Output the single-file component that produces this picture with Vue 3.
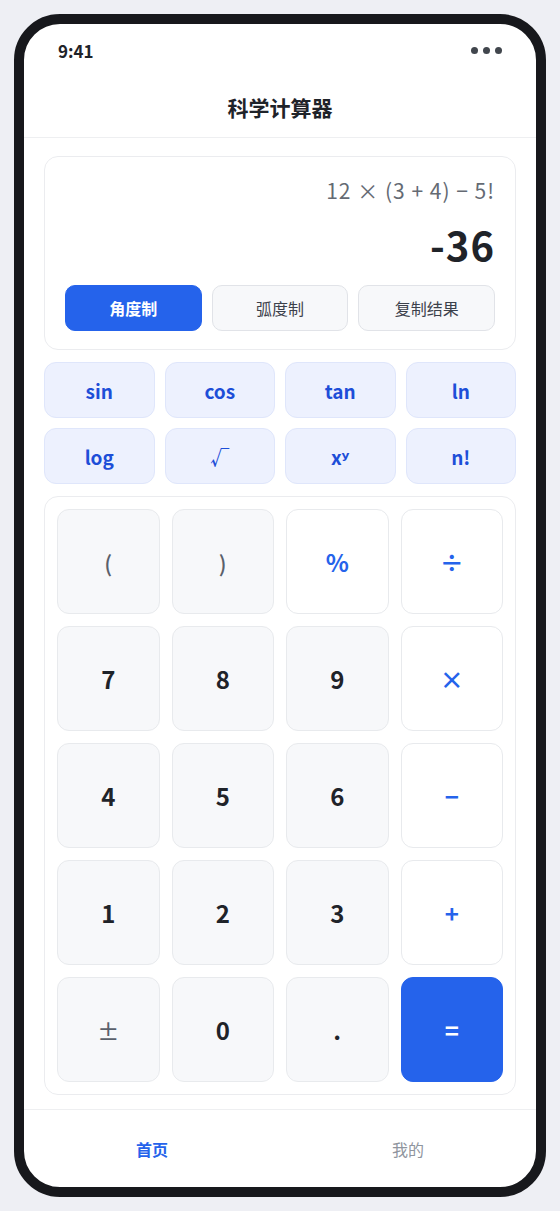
<script setup>
import { ref } from 'vue'

const modes = ['角度制', '弧度制', '复制结果']
const activeMode = ref('角度制')
const functions = ['sin', 'cos', 'tan', 'ln', 'log', '√', 'xʸ', 'n!']
const keys = [
  { label: '(', kind: 'aux' },
  { label: ')', kind: 'aux' },
  { label: '%', kind: 'operator' },
  { label: '÷', kind: 'operator' },
  { label: '7', kind: 'digit' },
  { label: '8', kind: 'digit' },
  { label: '9', kind: 'digit' },
  { label: '×', kind: 'operator' },
  { label: '4', kind: 'digit' },
  { label: '5', kind: 'digit' },
  { label: '6', kind: 'digit' },
  { label: '−', kind: 'operator' },
  { label: '1', kind: 'digit' },
  { label: '2', kind: 'digit' },
  { label: '3', kind: 'digit' },
  { label: '+', kind: 'operator' },
  { label: '±', kind: 'aux' },
  { label: '0', kind: 'digit' },
  { label: '.', kind: 'digit' },
  { label: '=', kind: 'equals' },
]
</script>

<template>
  <div class="page">
    <div class="phone">
      <div class="status">
        <span class="time">9:41</span>
        <span class="dots"><i></i><i></i><i></i></span>
      </div>
      <header class="header">
        <h1>科学计算器</h1>
      </header>
      <main class="content">
        <section class="display">
          <div class="expression">12 × (3 + 4) − 5!</div>
          <output class="result">-36</output>
          <div class="modes">
            <button
              v-for="mode in modes"
              :key="mode"
              type="button"
              class="mode"
              :class="{ active: mode === activeMode }"
            >{{ mode }}</button>
          </div>
        </section>
        <section class="functions">
          <button v-for="fn in functions" :key="fn" type="button" class="fn">{{ fn }}</button>
        </section>
        <section class="keypad">
          <button
            v-for="key in keys"
            :key="key.label"
            type="button"
            class="key"
            :class="key.kind"
          >{{ key.label }}</button>
        </section>
      </main>
      <nav class="tabs">
        <a href="#home" class="tab current">首页</a>
        <a href="#mine" class="tab">我的</a>
      </nav>
    </div>
  </div>
</template>

<style>
body {
  background: #eeeff4;
}
</style>

<style scoped>
.page {
  box-sizing: border-box;
  min-height: 100vh;
  padding: 14px;
  display: flex;
  background: #eeeff4;
  color: #1f2329;
  font-family: "Noto Sans CJK SC", "DejaVu Sans", sans-serif;
}
.phone {
  flex: 1;
  min-width: 0;
  display: flex;
  flex-direction: column;
  border: 10px solid #17181c;
  border-radius: 46px;
  background: #fff;
  overflow: hidden;
}
.status {
  display: flex;
  align-items: center;
  justify-content: space-between;
  height: 53px;
  padding: 0 34px;
}
.time {
  font-size: 17px;
  line-height: 25px;
  font-weight: 600;
}
.dots {
  display: flex;
  gap: 5px;
}
.dots i {
  width: 7px;
  height: 7px;
  border-radius: 50%;
  background: #41464d;
}
.header {
  height: 60px;
  display: flex;
  align-items: center;
  justify-content: center;
  border-bottom: 1px solid #eeeff1;
}
h1 {
  margin: 0;
  font-size: 21px;
  line-height: 30px;
  font-weight: 700;
}
.content {
  flex: 1;
  display: flex;
  flex-direction: column;
  gap: 12px;
  padding: 18px 20px 14px;
}
.display {
  padding: 18px 20px;
  border: 1px solid #ebecef;
  border-radius: 14px;
  text-align: right;
}
.expression {
  font-size: 21px;
  line-height: 30px;
  letter-spacing: 1px;
  color: #646a73;
}
.result {
  display: block;
  margin: 10px 0 12px;
  font-size: 40px;
  line-height: 58px;
  letter-spacing: 1px;
  font-weight: 700;
}
.modes {
  display: grid;
  grid-template-columns: repeat(3, 1fr);
  gap: 10px;
}
button {
  padding: 0;
  border: 1px solid;
  font-family: inherit;
  cursor: pointer;
}
.mode {
  height: 46px;
  border-color: #e1e3e8;
  border-radius: 10px;
  background: #f7f8fa;
  color: #3c414b;
  font-size: 16px;
}
.mode.active {
  border-color: #2563eb;
  background: #2563eb;
  color: #fff;
  font-weight: 600;
}
.functions {
  display: grid;
  grid-template-columns: repeat(4, 1fr);
  gap: 10px;
}
.fn {
  height: 56px;
  border-color: #dfe6fb;
  border-radius: 12px;
  background: #edf1fe;
  color: #1d4ed8;
  font-size: 19px;
  font-weight: 600;
}
.keypad {
  flex: 1;
  display: grid;
  grid-template-columns: repeat(4, 1fr);
  grid-auto-rows: 1fr;
  gap: 12px;
  padding: 12px;
  border: 1px solid #ebecef;
  border-radius: 14px;
}
.key {
  min-height: 64px;
  border-color: #e8eaed;
  border-radius: 12px;
  background: #f7f8fa;
  color: #1f2329;
  font-size: 24px;
  font-weight: 600;
}
.key.aux {
  color: #5a606b;
  font-size: 22px;
  font-weight: 500;
}
.key.operator {
  background: #fff;
  color: #2563eb;
}
.key.equals {
  border-color: #2563eb;
  background: #2563eb;
  color: #fff;
}
.tabs {
  display: grid;
  grid-template-columns: 1fr 1fr;
  height: 77px;
  border-top: 1px solid #eeeff1;
}
.tab {
  display: flex;
  align-items: center;
  justify-content: center;
  color: #8f959e;
  font-size: 16px;
  text-decoration: none;
}
.tab.current {
  color: #2563eb;
  font-weight: 600;
}
</style>
